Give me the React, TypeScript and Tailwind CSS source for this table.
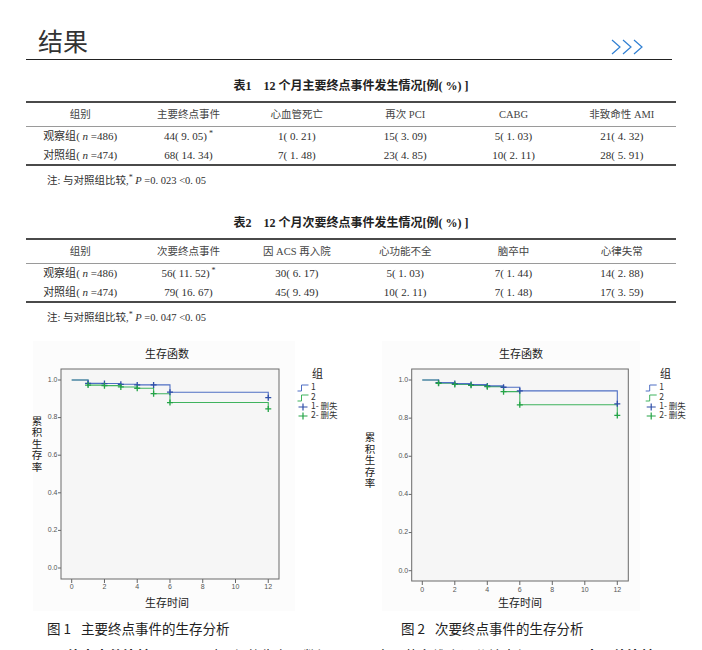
import type { ReactNode } from "react";

// Survival curves: [time, survival after the step]
type Step = [number, number];

interface ChartConfig {
  box: { l: number; t: number; r: number; b: number };
  x0: number; // px for t = 0
  xs: number; // px per month
  y1: number; // px for survival 1.0
  y0: number; // px for survival 0.0
  bgX: number;
  bgW: number;
  titleX: number;
  yLabelX: number;
  yLabelY: number;
  xLabelX: number;
  tickLabelY: number;
  legendTitleX: number;
  legendX: number;
  blue: Step[];
  green: Step[];
}

const BLUE = "#4f6fc4";
const BLUE_MARK = "#2f4fa8";
const GREEN = "#3fb35e";
const GREEN_MARK = "#24a447";

const chart1: ChartConfig = {
  box: { l: 34, t: 29, r: 252, b: 239 },
  x0: 44.7,
  xs: 16.38,
  y1: 40,
  y0: 228,
  bgX: 6,
  bgW: 262,
  titleX: 140,
  yLabelX: 10,
  yLabelY: 82,
  xLabelX: 140,
  tickLabelY: 247.5,
  legendTitleX: 285,
  legendX: 270.5,
  blue: [
    [1, 0.982],
    [2, 0.981],
    [3, 0.977],
    [4, 0.974],
    [5, 0.974],
    [6, 0.935],
    [12, 0.906],
  ],
  green: [
    [1, 0.973],
    [2, 0.97],
    [3, 0.963],
    [4, 0.956],
    [5, 0.927],
    [6, 0.88],
    [12, 0.846],
  ],
};

const chart2: ChartConfig = {
  box: { l: 59.7, t: 29, r: 276.3, b: 241 },
  x0: 70.3,
  xs: 16.25,
  y1: 40,
  y0: 230.7,
  bgX: 30,
  bgW: 258,
  titleX: 169,
  yLabelX: 18,
  yLabelY: 98.5,
  xLabelX: 168,
  tickLabelY: 250,
  legendTitleX: 308,
  legendX: 293.7,
  blue: [
    [1, 0.986],
    [2, 0.981],
    [3, 0.976],
    [4, 0.969],
    [5, 0.962],
    [6, 0.943],
    [12, 0.875],
  ],
  green: [
    [1, 0.983],
    [2, 0.977],
    [3, 0.972],
    [4, 0.965],
    [5, 0.939],
    [6, 0.87],
    [12, 0.814],
  ],
};

function SurvivalChart({ cfg }: { cfg: ChartConfig }) {
  const X = (t: number) => cfg.x0 + t * cfg.xs;
  const Y = (v: number) => cfg.y0 - v * (cfg.y0 - cfg.y1);
  const stepPath = (steps: Step[]) => {
    let d = `M${X(0)} ${Y(1)}`;
    for (const [t, v] of steps) d += ` H${X(t)} V${Y(v)}`;
    return d;
  };
  const plus = (x: number, y: number) => `M${x - 3} ${y}h6M${x} ${y - 3}v6`;
  const { box } = cfg;
  const sx = cfg.legendX;
  const legendY = [48, 58, 67, 76];

  return (
    <svg width={345} height={272} className="font-['Noto_Sans_CJK_SC',sans-serif]">
      <rect x={cfg.bgX} y={1} width={cfg.bgW} height={270} fill="#fcfcfc" />
      <text x={cfg.titleX} y={15} fontSize={11} fill="#222" textAnchor="middle" dominantBaseline="middle">
        生存函数
      </text>

      <rect x={box.l} y={box.t} width={box.r - box.l} height={box.b - box.t} fill="#f6f6f6" stroke="#6a6a6a" strokeWidth={1} />

      {[0, 0.2, 0.4, 0.6, 0.8, 1].map((v) => (
        <g key={v}>
          <path d={`M${box.l - 3} ${Y(v)}H${box.l}`} stroke="#666" strokeWidth={1} />
          <text x={box.l - 3.5} y={Y(v)} fontSize={7} fill="#555" textAnchor="end" dominantBaseline="middle" className="font-['Liberation_Sans',sans-serif]">
            {v.toFixed(1)}
          </text>
        </g>
      ))}
      {[0, 2, 4, 6, 8, 10, 12].map((t) => (
        <g key={t}>
          <path d={`M${X(t)} ${box.b}V${box.b + 4}`} stroke="#666" strokeWidth={1} />
          <text x={X(t)} y={cfg.tickLabelY} fontSize={7} fill="#555" textAnchor="middle" dominantBaseline="middle" className="font-['Liberation_Sans',sans-serif]">
            {t}
          </text>
        </g>
      ))}

      <path d={stepPath(cfg.green)} fill="none" stroke={GREEN} strokeWidth={1.1} />
      <path d={stepPath(cfg.blue)} fill="none" stroke={BLUE} strokeWidth={1.1} />
      {cfg.blue.map(([t, v]) => (
        <path key={`b${t}`} d={plus(X(t), Y(v))} stroke={BLUE_MARK} strokeWidth={1.3} />
      ))}
      {cfg.green.map(([t, v]) => (
        <path key={`g${t}`} d={plus(X(t), Y(v))} stroke={GREEN_MARK} strokeWidth={1.3} />
      ))}

      {["累", "积", "生", "存", "率"].map((c, i) => (
        <text key={c} x={cfg.yLabelX} y={cfg.yLabelY + i * 11.5} fontSize={10.5} fill="#222" textAnchor="middle" dominantBaseline="middle">
          {c}
        </text>
      ))}
      <text x={cfg.xLabelX} y={264} fontSize={11} fill="#222" textAnchor="middle" dominantBaseline="middle">
        生存时间
      </text>

      {/* legend */}
      <text x={cfg.legendTitleX} y={35} fontSize={11} fill="#222" dominantBaseline="middle">
        组
      </text>
      <path d={`M${sx} ${legendY[0] + 3}h4v-6h7`} fill="none" stroke={BLUE} strokeWidth={1} />
      <path d={`M${sx} ${legendY[1] + 3}h4v-6h7`} fill="none" stroke={GREEN} strokeWidth={1} />
      <path d={`M${sx + 1} ${legendY[2]}h9M${sx + 5.5} ${legendY[2] - 3.5}v7`} stroke={BLUE_MARK} strokeWidth={1.2} />
      <path d={`M${sx + 1} ${legendY[3]}h9M${sx + 5.5} ${legendY[3] - 3.5}v7`} stroke={GREEN_MARK} strokeWidth={1.2} />
      {["1", "2", "1- 删失", "2- 删失"].map((label, i) => (
        <text key={label} x={sx + 13.5} y={legendY[i]} fontSize={8.5} fill="#333" dominantBaseline="middle">
          {label}
        </text>
      ))}
    </svg>
  );
}

interface TableProps {
  index: number;
  title: string;
  headers: string[];
  rows: { group: string; n: string; cells: ReactNode[] }[];
  p: string;
}

function Star() {
  return <sup className="ml-[2px] text-[8px]">*</sup>;
}

function ResultTable({ index, title, headers, rows, p }: TableProps) {
  return (
    <section className="font-['Liberation_Serif','Noto_Sans_CJK_SC',serif] text-[#2f2f2f]">
      <h2 className="text-center text-[12px] leading-[16px] font-bold text-[#222]">
        表{index}
        <span className="ml-[12px]">12 个月{title}事件发生情况[例( %) ]</span>
      </h2>
      <div className="mx-[26px] mt-[7px] border-y-2 border-[#4a4a4a]">
        <div className="grid h-[24px] grid-cols-6 items-center border-b border-[#9a9a9a] text-center text-[10.5px] text-[#444]">
          {headers.map((h) => (
            <div key={h}>{h}</div>
          ))}
        </div>
        {rows.map((r) => (
          <div key={r.group} className="grid h-[18.5px] grid-cols-6 items-center text-center text-[11px] leading-[18px]">
            <div>
              {r.group}( <i>n</i> ={r.n})
            </div>
            {r.cells.map((c, i) => (
              <div key={i}>{c}</div>
            ))}
          </div>
        ))}
      </div>
      <p className="mt-[7px] pl-[47px] text-[10.5px] leading-[16px]">
        注: 与对照组比较,
        <sup className="text-[8px]">*</sup> <i>P</i> ={p} &lt;0. 05
      </p>
    </section>
  );
}

export default function App() {
  return (
    <div className="h-[650px] w-[702px] overflow-hidden bg-white text-[#333]">
      <header className="mr-[30px] ml-[26px] flex items-end justify-between border-b border-[#222] pt-[24px] pb-[3px]">
        <h1 className="pl-[12px] font-['Noto_Sans_CJK_SC',sans-serif] text-[25px] leading-[32px] text-[#333]">结果</h1>
        <svg width={34} height={16} className="mr-[27px] mb-[1px]" fill="none" stroke="#2f7fd2" strokeWidth={1.2}>
          <path d="M1 1l8 7-8 7M12 1l8 7-8 7M23 1l8 7-8 7" />
        </svg>
      </header>

      <div className="mt-[18px]">
        <ResultTable
          index={1}
          title="主要终点"
          headers={["组别", "主要终点事件", "心血管死亡", "再次 PCI", "CABG", "非致命性 AMI"]}
          rows={[
            {
              group: "观察组",
              n: "486",
              cells: [
                <>
                  44( 9. 05)
                  <Star />
                </>,
                "1( 0. 21)",
                "15( 3. 09)",
                "5( 1. 03)",
                "21( 4. 32)",
              ],
            },
            { group: "对照组", n: "474", cells: ["68( 14. 34)", "7( 1. 48)", "23( 4. 85)", "10( 2. 11)", "28( 5. 91)"] },
          ]}
          p="0. 023"
        />
      </div>

      <div className="mt-[26px]">
        <ResultTable
          index={2}
          title="次要终点"
          headers={["组别", "次要终点事件", "因 ACS 再入院", "心功能不全", "脑卒中", "心律失常"]}
          rows={[
            {
              group: "观察组",
              n: "486",
              cells: [
                <>
                  56( 11. 52)
                  <Star />
                </>,
                "30( 6. 17)",
                "5( 1. 03)",
                "7( 1. 44)",
                "14( 2. 88)",
              ],
            },
            { group: "对照组", n: "474", cells: ["79( 16. 67)", "45( 9. 49)", "10( 2. 11)", "7( 1. 48)", "17( 3. 59)"] },
          ]}
          p="0. 047"
        />
      </div>

      <div className="mt-[14px] ml-[27px] flex font-['Noto_Sans_CJK_SC',sans-serif]">
        <figure className="w-[325px]">
          <SurvivalChart cfg={chart1} />
          <figcaption className="mt-[8px] pl-[20px] text-[13.5px] leading-[16px] text-[#222]">
            图 1<span className="ml-[10px]">主要终点事件的生存分析</span>
          </figcaption>
        </figure>
        <figure className="w-[345px]">
          <SurvivalChart cfg={chart2} />
          <figcaption className="mt-[8px] pl-[49px] text-[13.5px] leading-[16px] text-[#222]">
            图 2<span className="ml-[10px]">次要终点事件的生存分析</span>
          </figcaption>
        </figure>
      </div>

      <p className="mt-[9px] flex whitespace-nowrap font-['Noto_Sans_CJK_SC',sans-serif] text-[14px] leading-[20px] text-[#222]">
        <span className="ml-[67px] font-bold">终点事件比较</span>
        <span className="ml-[54px]">对照组的生存函数间，观</span>
        <span className="ml-[17px]">察显著多维度评分较大组</span>
        <span className="ml-[55px] font-bold">大压值比较</span>
      </p>
    </div>
  );
}
